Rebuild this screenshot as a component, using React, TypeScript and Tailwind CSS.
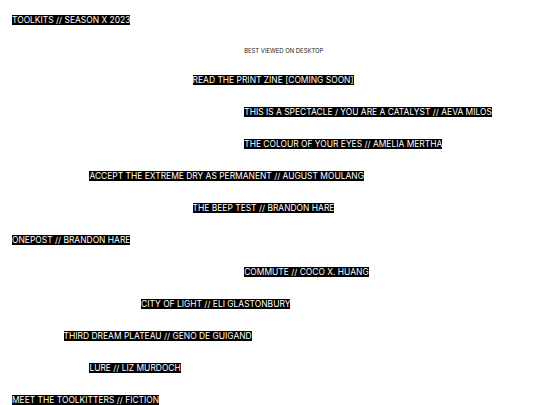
import React from "react";

const items: { t: string; c: string }[] = [
  { t: "READ THE PRINT ZINE [COMING SOON]", c: "col-start-8" },
  { t: "THIS IS A SPECTACLE / YOU ARE A CATALYST // AEVA MILOS", c: "col-start-10" },
  { t: "THE COLOUR OF YOUR EYES // AMELIA MERTHA", c: "col-start-10" },
  { t: "ACCEPT THE EXTREME DRY AS PERMANENT // AUGUST MOULANG", c: "col-start-4" },
  { t: "THE BEEP TEST // BRANDON HARE", c: "col-start-8" },
  { t: "ONEPOST // BRANDON HARE", c: "col-start-1" },
  { t: "COMMUTE // COCO X. HUANG", c: "col-start-10" },
  { t: "CITY OF LIGHT // ELI GLASTONBURY", c: "col-start-6" },
  { t: "THIRD DREAM PLATEAU // GENO DE GUIGAND", c: "col-start-3" },
  { t: "LURE // LIZ MURDOCH", c: "col-start-4" },
  { t: "MEET THE TOOLKITTERS // FICTION", c: "col-start-1" },
];

export default function App() {
  return (
    <div className="min-h-[405px] bg-white px-3 pt-[15px] text-[8.45px] leading-[10px] font-['Inter',sans-serif]">
      <div className="whitespace-nowrap">
        <span className="bg-black text-white">TOOLKITS // SEASON X 2023</span>
      </div>
      <div className="mt-[21px] grid grid-cols-20">
        <div className="col-start-10 col-end-21 whitespace-nowrap text-[5.9px] text-[#222]">
          BEST VIEWED ON DESKTOP
        </div>
      </div>
      <div className="mt-[19px] flex flex-col gap-[22px]">
        {items.map((it) => (
          <div key={it.t} className="grid grid-cols-20">
            <div className={`${it.c} col-end-21 whitespace-nowrap`}>
              <span className="bg-black text-white">{it.t}</span>
            </div>
          </div>
        ))}
      </div>
    </div>
  );
}
